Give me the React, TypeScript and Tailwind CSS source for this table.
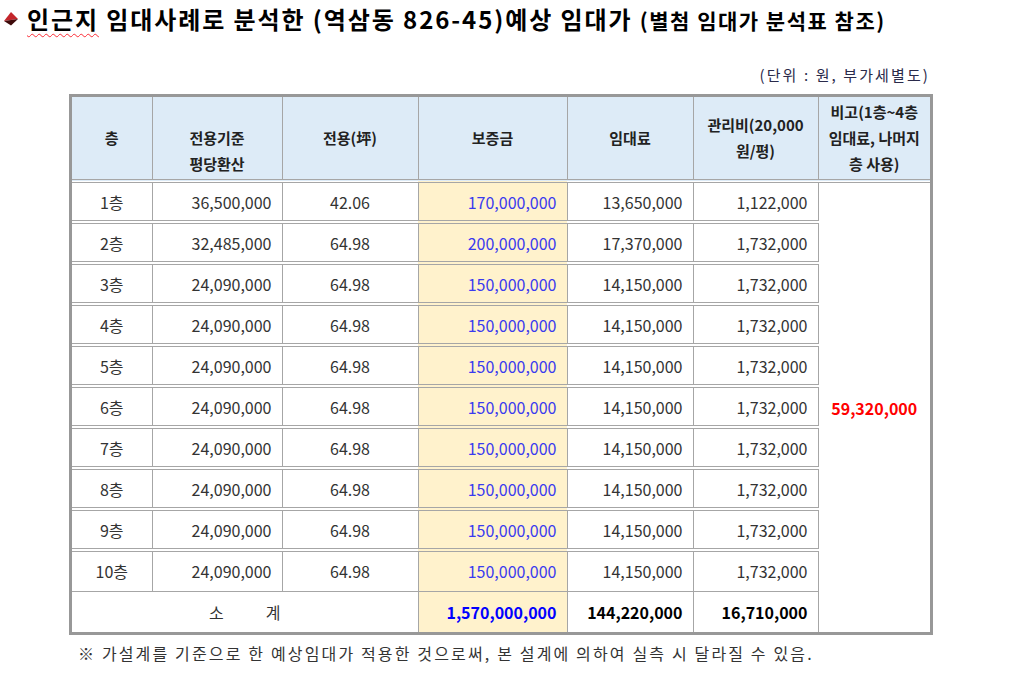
import React from "react";

const rows = [
  ["1층", "36,500,000", "42.06", "170,000,000", "13,650,000", "1,122,000"],
  ["2층", "32,485,000", "64.98", "200,000,000", "17,370,000", "1,732,000"],
  ["3층", "24,090,000", "64.98", "150,000,000", "14,150,000", "1,732,000"],
  ["4층", "24,090,000", "64.98", "150,000,000", "14,150,000", "1,732,000"],
  ["5층", "24,090,000", "64.98", "150,000,000", "14,150,000", "1,732,000"],
  ["6층", "24,090,000", "64.98", "150,000,000", "14,150,000", "1,732,000"],
  ["7층", "24,090,000", "64.98", "150,000,000", "14,150,000", "1,732,000"],
  ["8층", "24,090,000", "64.98", "150,000,000", "14,150,000", "1,732,000"],
  ["9층", "24,090,000", "64.98", "150,000,000", "14,150,000", "1,732,000"],
  ["10층", "24,090,000", "64.98", "150,000,000", "14,150,000", "1,732,000"],
];

function TitleArrow() {
  return (
    <svg width="20" height="20" viewBox="0 0 20 20" className="shrink-0 mt-[4px]">
      <polygon points="10,4 17,11 10,12 3,13" fill="#c4262c" />
      <polygon points="3,13 10,12 17,11 10,17.5" fill="#3e0a0a" />
    </svg>
  );
}

export default function App() {
  const cell = "border border-double border-[#a6a6a6]";
  const head = "bg-[#ddebf7] font-bold text-[15px] leading-[26px] text-[#222] text-center align-middle";

  return (
    <div
      className="w-[1016px] h-[688px] bg-white text-[#333] overflow-hidden"
      style={{ fontFamily: '"Noto Sans CJK KR", "Noto Sans", sans-serif' }}
    >
      {/* title */}
      <div className="flex items-start gap-[6px] pl-[1px] pt-[4px] h-[34px]">
        <TitleArrow />
        <h1 className="text-[24px] font-bold leading-[30px] tracking-[1.9px] text-black whitespace-nowrap">
          <span className="underline decoration-wavy decoration-red-500 decoration-1 underline-offset-4">인근지</span>{" "}
          임대사례로 분석한 (역삼동 826-45)예상 임대가{" "}
          <span className="text-[21px] tracking-[1.5px]">(별첨 임대가 분석표 참조)</span>
        </h1>
      </div>

      {/* unit */}
      <div className="w-[930px] mt-[31px] text-right text-[15px] leading-[20px] tracking-[2.1px] text-[#2a2a4a]">
        (단위 : 원, 부가세별도)
      </div>

      {/* table */}
      <div className="ml-[69px] mt-[9px] w-[864px] border-[3px] border-[#989898]">
        <table className="w-full table-fixed border-collapse border-hidden">
          <colgroup>
            <col className="w-[80px]" />
            <col className="w-[130px]" />
            <col className="w-[136px]" />
            <col className="w-[149px]" />
            <col className="w-[126px]" />
            <col className="w-[125px]" />
            <col className="w-[112px]" />
          </colgroup>
          <thead>
            <tr className="h-[84px]">
              <th className={`${cell} border-b-4 ${head}`}>층</th>
              <th className={`${cell} border-b-4 ${head} pt-[25px]`}>
                전용기준
                <br />
                평당환산
              </th>
              <th className={`${cell} border-b-4 ${head}`}>전용(坪)</th>
              <th className={`${cell} border-b-4 ${head}`}>보증금</th>
              <th className={`${cell} border-b-4 ${head}`}>임대료</th>
              <th className={`${cell} border-b-4 ${head}`}>
                관리비(20,000
                <br />
                원/평)
              </th>
              <th className={`${cell} border-b-4 ${head}`}>
                비고(1층~4층
                <br />
                임대료, 나머지
                <br />층 사용)
              </th>
            </tr>
          </thead>
          <tbody className="text-[16px]">
            {rows.map((r, i) => {
              const last = i === rows.length - 1;
              const rb = last ? "border-b" : "border-b-4";
              return (
                <tr key={r[0]} className="h-[41px]">
                  <td className={`${cell} ${rb} text-center`}>{r[0]}</td>
                  <td className={`${cell} ${rb} text-right pr-[10px]`}>{r[1]}</td>
                  <td className={`${cell} ${rb} text-center`}>{r[2]}</td>
                  <td className={`${cell} ${rb} text-right pr-[10px] bg-[#fff2cc] text-[#3a3aef]`}>{r[3]}</td>
                  <td className={`${cell} ${rb} text-right pr-[10px]`}>{r[4]}</td>
                  <td className={`${cell} ${rb} text-right pr-[10px]`}>{r[5]}</td>
                  {i === 0 && (
                    <td
                      rowSpan={11}
                      className={`${cell} border-t-4 text-center align-middle font-bold text-[#ff0000]`}
                    >
                      59,320,000
                    </td>
                  )}
                </tr>
              );
            })}
            <tr className="h-[41px] font-bold text-black">
              <td colSpan={3} className={`${cell} border-t text-center font-normal text-[#333]`}>
                <span className="inline-flex gap-[42px]">
                  <span>소</span>
                  <span>계</span>
                </span>
              </td>
              <td className={`${cell} border-t text-right pr-[10px] bg-[#fff2cc] text-[#0000ff]`}>1,570,000,000</td>
              <td className={`${cell} border-t text-right pr-[10px]`}>144,220,000</td>
              <td className={`${cell} border-t text-right pr-[10px]`}>16,710,000</td>
            </tr>
          </tbody>
        </table>
      </div>

      {/* note */}
      <p className="ml-[78px] mt-[7px] text-[16px] leading-[22px] tracking-[2.15px] text-[#333] whitespace-nowrap">
        ※ 가설계를 기준으로 한 예상임대가 적용한 것으로써, 본 설계에 의하여 실측 시 달라질 수 있음.
      </p>
    </div>
  );
}
